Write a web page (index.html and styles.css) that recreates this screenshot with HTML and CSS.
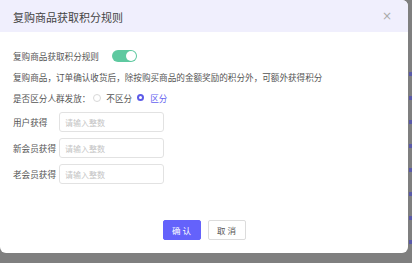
FILE: index.html
```html
<!DOCTYPE html>
<html lang="zh">
<head>
    <meta charset="UTF-8">
    <meta name="viewport" content="width=device-width, initial-scale=1.0">
    <title>复购商品获取积分规则</title>
    <link rel="stylesheet" href="styles.css">
</head>
<body class="page">
    <div class="wrap">
        <div class="dialog">
            <div class="dialog_head">
                <span class="dialog_title">复购商品获取积分规则</span>
                <span class="close">×</span>
            </div>
            <div class="dialog_body">
                <div class="row">
                    <span>复购商品获取积分规则</span>
                    <span class="switch"><span class="knob"></span></span>
                </div>
                <div class="row">复购商品，订单确认收货后，除按购买商品的金额奖励的积分外，可额外获得积分</div>
                <div class="row">
                    <span>是否区分人群发放：</span>
                    <span class="radio"></span>
                    <span class="radio_text">不区分</span>
                    <span class="radio radio_on"></span>
                    <span class="radio_text on">区分</span>
                </div>
                <div class="fields">
                    <div class="field">
                        <span class="field_label">用户获得</span>
                        <input class="input" placeholder="请输入整数">
                    </div>
                    <div class="field">
                        <span class="field_label">新会员获得</span>
                        <input class="input" placeholder="请输入整数">
                    </div>
                    <div class="field">
                        <span class="field_label">老会员获得</span>
                        <input class="input" placeholder="请输入整数">
                    </div>
                </div>
            </div>
            <div class="dialog_foot">
                <button class="btn btn_ok">确 认</button>
                <button class="btn btn_cancel">取 消</button>
            </div>
        </div>
        <div class="behind">
            <span></span><span></span><span></span><span></span>
            <span></span><span></span><span></span><span></span>
        </div>
    </div>
</body>
</html>
```

FILE: styles.css
```css
body {
    margin: 0;
}
.page {
    background: #7f7f7f;
    font-family: "Noto Sans CJK SC", "Liberation Sans", sans-serif;
    width: 412px;
    height: 263px;
    overflow: hidden;
}
.wrap {
    display: flex;
}
.dialog {
    width: 408px;
    height: 253px;
    background: #fff;
    border-radius: 0 6px 6px 6px;
    overflow: hidden;
    display: flex;
    flex-direction: column;
}
.dialog_head {
    height: 32px;
    background: #f0effd;
    display: flex;
    align-items: center;
    justify-content: space-between;
    padding: 0 16px 0 13px;
}
.dialog_title {
    font-size: 11px;
    color: #444;
    padding-top: 2px;
}
.close {
    font-size: 12px;
    color: #aaa;
    font-family: "DejaVu Sans", sans-serif;
}
.dialog_body {
    padding: 13px 13px 0 13px;
    font-size: 8.6px;
    color: #555;
}
.row {
    height: 21px;
    display: flex;
    align-items: center;
    white-space: nowrap;
}
.switch {
    width: 25px;
    height: 12px;
    border-radius: 6px;
    background: #5ec9a0;
    margin-left: 13px;
    display: flex;
    align-items: center;
    justify-content: flex-end;
    padding-right: 1px;
    box-sizing: border-box;
}
.knob {
    width: 10px;
    height: 10px;
    border-radius: 50%;
    background: #fff;
}
.radio {
    width: 6px;
    height: 6px;
    border: 1px solid #d8d8d8;
    border-radius: 50%;
    margin: 0 5px 0 3px;
}
.radio_on {
    border: 2.5px solid #5d5ce8;
    width: 3px;
    height: 3px;
    margin: 0 6px 0 5px;
}
.radio_text {
    color: #555;
}
.radio_text.on {
    color: #6462f0;
}
.fields {
    margin-top: 4px;
    display: flex;
    flex-direction: column;
    gap: 6px;
}
.field {
    display: flex;
    align-items: center;
}
.field_label {
    width: 46px;
    white-space: nowrap;
}
.input {
    width: 105px;
    height: 20px;
    box-sizing: border-box;
    border: 1px solid #e2e2e2;
    border-radius: 3px;
    padding: 0 5px;
    font-family: inherit;
    font-size: 8px;
    outline: none;
}
.input::placeholder {
    color: #c4c4c4;
}
.dialog_foot {
    margin-top: auto;
    padding-bottom: 13px;
    display: flex;
    justify-content: center;
    gap: 7px;
}
.btn {
    width: 38px;
    height: 20px;
    border-radius: 2px;
    font-family: inherit;
    font-size: 8.5px;
    padding: 0;
    cursor: pointer;
}
.btn_ok {
    background: #6462fb;
    border: 1px solid #6462fb;
    color: #fff;
}
.btn_cancel {
    background: #fff;
    border: 1px solid #dcdcdc;
    color: #555;
}
.behind {
    width: 4px;
    padding-top: 72px;
    display: flex;
    flex-direction: column;
    gap: 20px;
    align-items: flex-end;
}
.behind span {
    width: 3px;
    height: 4px;
    background: #5a5aa8;
}
```
